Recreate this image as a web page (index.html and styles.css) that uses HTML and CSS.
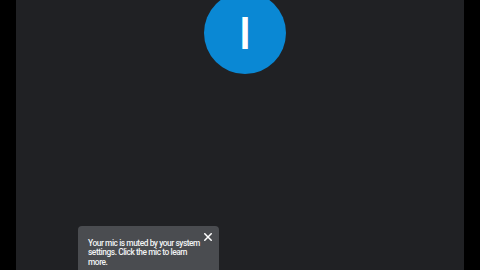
FILE: index.html
```html
<!DOCTYPE html>
<html>
<head>
<meta charset="utf-8">
<link rel="stylesheet" href="styles.css">
</head>
<body>
<div class="stage">
  <div class="panel">
    <div class="avatar"><span class="initial">I</span></div>
    <div class="toast">
      <p class="toast-text">Your mic is muted by your system settings. Click the mic to learn more.</p>
      <button class="toast-close" aria-label="Close">
        <svg width="8" height="8" viewBox="0 0 8 8"><path d="M0.8 0.8L7.2 7.2M7.2 0.8L0.8 7.2" stroke="#fff" stroke-width="1.5" stroke-linecap="square"/></svg>
      </button>
    </div>
  </div>
</div>
</body>
</html>
```
FILE: styles.css
```css
html, body {
  margin: 0;
  padding: 0;
  background: #000;
}
.stage {
  width: 480px;
  height: 270px;
  display: flex;
  justify-content: center;
  background: #000;
}
.panel {
  position: relative;
  width: 448px;
  height: 270px;
  background: #202124;
  overflow: hidden;
  display: flex;
  flex-direction: column;
  align-items: center;
}
.avatar {
  margin-top: -8px;
  margin-left: 10px;
  width: 82px;
  height: 82px;
  flex: none;
  border-radius: 50%;
  background: #0a88d4;
  display: flex;
  align-items: center;
  justify-content: center;
}
.initial {
  font-family: Roboto, "Liberation Sans", sans-serif;
  font-size: 44px;
  font-weight: 500;
  line-height: 1;
  color: #fff;
  margin-top: 2px;
}
.toast {
  position: absolute;
  left: 62px;
  top: 226px;
  width: 141px;
  height: 60px;
  box-sizing: border-box;
  background: #4a4c50;
  border-radius: 4px;
  padding: 13px 14px 0 10px;
}
.toast-text {
  margin: 0;
  font-family: Roboto, "Liberation Sans", sans-serif;
  font-size: 8.4px;
  font-weight: 500;
  letter-spacing: -0.45px;
  line-height: 9.4px;
  color: #f1f3f4;
}
.toast-close {
  position: absolute;
  top: 7px;
  right: 7px;
  width: 8px;
  height: 8px;
  padding: 0;
  border: 0;
  background: none;
  display: flex;
}
```
